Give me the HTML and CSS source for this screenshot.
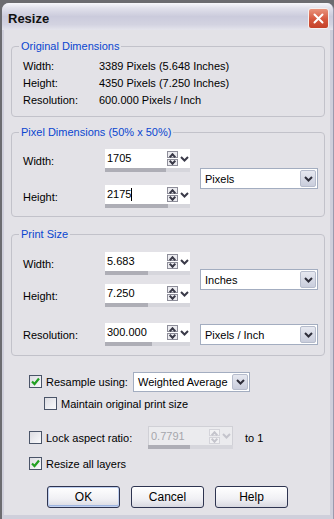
FILE: index.html
```html
<!DOCTYPE html>
<html lang="en">
<head>
    <meta charset="UTF-8">
    <title>Resize</title>
    <link rel="stylesheet" href="styles.css">
</head>
<body>
<div class="window">
    <div class="titlebar">
        <span class="title">Resize</span>
        <span class="close">
            <svg width="11" height="11" viewBox="0 0 11 11"><path d="M1.5 1.5 L9.5 9.5 M9.5 1.5 L1.5 9.5" stroke="#fff" stroke-width="2" stroke-linecap="round"/></svg>
        </span>
    </div>

    <div class="client">
        <!-- original dimensions -->
        <fieldset class="group original">
            <legend>Original Dimensions</legend>
            <div class="info-row"><span class="label">Width:</span><span>3389 Pixels (5.648 Inches)</span></div>
            <div class="info-row"><span class="label">Height:</span><span>4350 Pixels (7.250 Inches)</span></div>
            <div class="info-row"><span class="label">Resolution:</span><span>600.000 Pixels / Inch</span></div>
        </fieldset>

        <!-- pixel dimensions -->
        <fieldset class="group pixel-dims">
            <legend>Pixel Dimensions (50% x 50%)</legend>
            <div class="field-grid">
                <span class="label">Width:</span>
                <div class="numbox">
                    <div class="numbox-top">
                        <span class="numbox-value">1705</span>
                        <span class="spin"><span class="spin-up"></span><span class="spin-down"></span></span>
                        <span class="drop"><svg width="9" height="6" viewBox="0 0 9 6"><path d="M1 1 L4.5 4.5 L8 1" fill="none" stroke="#3a3a48" stroke-width="2"/></svg></span>
                    </div>
                    <div class="slider"><div class="slider-fill" style="width:72%"></div></div>
                </div>
                <div class="combo unit">
                    <span class="combo-text">Pixels</span>
                    <span class="combo-btn"><svg width="9" height="6" viewBox="0 0 9 6"><path d="M1 1 L4.5 4.5 L8 1" fill="none" stroke="#2e2e3a" stroke-width="2"/></svg></span>
                </div>
                <span class="label">Height:</span>
                <div class="numbox">
                    <div class="numbox-top">
                        <span class="numbox-value">2175<span class="caret"></span></span>
                        <span class="spin"><span class="spin-up"></span><span class="spin-down"></span></span>
                        <span class="drop"><svg width="9" height="6" viewBox="0 0 9 6"><path d="M1 1 L4.5 4.5 L8 1" fill="none" stroke="#3a3a48" stroke-width="2"/></svg></span>
                    </div>
                    <div class="slider"><div class="slider-fill" style="width:74%"></div></div>
                </div>
            </div>
        </fieldset>

        <!-- print size -->
        <fieldset class="group print-size">
            <legend>Print Size</legend>
            <div class="field-grid three">
                <span class="label">Width:</span>
                <div class="numbox">
                    <div class="numbox-top">
                        <span class="numbox-value">5.683</span>
                        <span class="spin"><span class="spin-up"></span><span class="spin-down"></span></span>
                        <span class="drop"><svg width="9" height="6" viewBox="0 0 9 6"><path d="M1 1 L4.5 4.5 L8 1" fill="none" stroke="#3a3a48" stroke-width="2"/></svg></span>
                    </div>
                    <div class="slider"><div class="slider-fill" style="width:50%"></div></div>
                </div>
                <div class="combo unit">
                    <span class="combo-text">Inches</span>
                    <span class="combo-btn"><svg width="9" height="6" viewBox="0 0 9 6"><path d="M1 1 L4.5 4.5 L8 1" fill="none" stroke="#2e2e3a" stroke-width="2"/></svg></span>
                </div>
                <span class="label">Height:</span>
                <div class="numbox">
                    <div class="numbox-top">
                        <span class="numbox-value">7.250</span>
                        <span class="spin"><span class="spin-up"></span><span class="spin-down"></span></span>
                        <span class="drop"><svg width="9" height="6" viewBox="0 0 9 6"><path d="M1 1 L4.5 4.5 L8 1" fill="none" stroke="#3a3a48" stroke-width="2"/></svg></span>
                    </div>
                    <div class="slider"><div class="slider-fill" style="width:51%"></div></div>
                </div>
                <span class="label res">Resolution:</span>
                <div class="numbox res">
                    <div class="numbox-top">
                        <span class="numbox-value">300.000</span>
                        <span class="spin"><span class="spin-up"></span><span class="spin-down"></span></span>
                        <span class="drop"><svg width="9" height="6" viewBox="0 0 9 6"><path d="M1 1 L4.5 4.5 L8 1" fill="none" stroke="#3a3a48" stroke-width="2"/></svg></span>
                    </div>
                    <div class="slider"><div class="slider-fill" style="width:55%"></div></div>
                </div>
                <div class="combo res res-unit">
                    <span class="combo-text">Pixels / Inch</span>
                    <span class="combo-btn"><svg width="9" height="6" viewBox="0 0 9 6"><path d="M1 1 L4.5 4.5 L8 1" fill="none" stroke="#2e2e3a" stroke-width="2"/></svg></span>
                </div>
            </div>
        </fieldset>

        <!-- options -->
        <div class="options">
            <div class="opt-row resample">
                <span class="check checked"><svg width="11" height="11" viewBox="0 0 11 11"><path d="M2 5.5 L4.5 8 L9 2.5" fill="none" stroke="#22a022" stroke-width="2.2"/></svg></span>
                <span class="opt-label">Resample using:</span>
                <div class="combo method">
                    <span class="combo-text">Weighted Average</span>
                    <span class="combo-btn"><svg width="9" height="6" viewBox="0 0 9 6"><path d="M1 1 L4.5 4.5 L8 1" fill="none" stroke="#2e2e3a" stroke-width="2"/></svg></span>
                </div>
            </div>
            <div class="opt-row maintain">
                <span class="check"></span>
                <span class="opt-label">Maintain original print size</span>
            </div>
            <div class="opt-row lock">
                <span class="check"></span>
                <span class="opt-label">Lock aspect ratio:</span>
                <div class="numbox disabled">
                    <div class="numbox-top">
                        <span class="numbox-value">0.7791</span>
                        <span class="spin"><span class="spin-up"></span><span class="spin-down"></span></span>
                        <span class="drop"><svg width="9" height="6" viewBox="0 0 9 6"><path d="M1 1 L4.5 4.5 L8 1" fill="none" stroke="#c4c4cc" stroke-width="2"/></svg></span>
                    </div>
                    <div class="slider"><div class="slider-fill" style="width:49%"></div></div>
                </div>
                <span class="to-one">to 1</span>
            </div>
            <div class="opt-row layers">
                <span class="check checked"><svg width="11" height="11" viewBox="0 0 11 11"><path d="M2 5.5 L4.5 8 L9 2.5" fill="none" stroke="#22a022" stroke-width="2.2"/></svg></span>
                <span class="opt-label">Resize all layers</span>
            </div>
        </div>

        <div class="buttons">
            <button class="btn default">OK</button>
            <button class="btn">Cancel</button>
            <button class="btn">Help</button>
        </div>
    </div>
</div>
</body>
</html>
```

FILE: styles.css
```css
body {
    margin: 0;
    background-color: #6c6c70;
    font-family: "Liberation Sans", Arial, sans-serif;
    font-size: 11px;
    color: #000;
}

.window {
    width: 332px;
    height: 516px;
    margin: 3px 0 0 2px;
    background-color: #cfcfdb;
    border-radius: 7px 7px 0 0;
    border-right: 1px solid #9a9aae;
    box-sizing: border-box;
    overflow: hidden;
}

.titlebar {
    height: 27px;
    box-sizing: border-box;
    padding: 5px 4px 0 6px;
    display: flex;
    align-items: center;
    justify-content: space-between;
    background: linear-gradient(#f8f8fc 0%, #e2e2ec 18%, #cbcbdc 50%, #d3d3e1 80%, #e4e4ec 100%);
}

.title {
    font-size: 13px;
    font-weight: bold;
    color: #111;
    line-height: 22px;
}

.close {
    width: 21px;
    height: 21px;
    box-sizing: border-box;
    border: 1px solid #f4f0f0;
    border-radius: 3px;
    background: linear-gradient(#e9937c, #d5563d 55%, #c4412a);
    display: flex;
    align-items: center;
    justify-content: center;
    margin-top: -2px;
}

.client {
    margin: 0 3px 0 2px;
    height: 485px;
    background-color: #e3e2e7;
    overflow: hidden;
    padding-top: 9px;
    box-sizing: border-box;
}

/* group boxes */
.group {
    margin: 0 5px 0 7px;
    border: 1px solid #c2c2ca;
    border-radius: 4px;
    padding: 5px 5px 7px 11px;
}

.group legend {
    color: #0a46d0;
    line-height: 14px;
    padding: 0 2px;
    margin-left: -4px;
}

.pixel-dims {
    margin-top: 8px;
    padding-top: 10px;
    padding-bottom: 8px;
}

.print-size {
    margin-top: 10px;
    padding-top: 11px;
    padding-bottom: 9px;
}

.info-row {
    display: flex;
    line-height: 17px;
}

.info-row .label {
    width: 76px;
}

.field-grid {
    display: grid;
    grid-template-columns: 82px 95px 118px;
    grid-template-rows: 23px 23px;
    row-gap: 13px;
    align-items: center;
}

.field-grid.three {
    grid-template-rows: 23px 23px auto;
    row-gap: 9px;
}

.field-grid .res {
    margin-top: 7px;
}

.field-grid .unit {
    grid-column: 3;
    grid-row: 1 / span 2;
}

.field-grid .res-unit {
    grid-column: 3;
    grid-row: 3;
}

/* numeric edit with slider */
.numbox {
    width: 85px;
    height: 23px;
    display: flex;
    flex-direction: column;
}

.numbox-top {
    height: 19px;
    display: flex;
    align-items: center;
    background-color: #fff;
}

.numbox-value {
    flex: 1;
    padding-left: 2px;
    line-height: 17px;
    display: flex;
    align-items: center;
}

.caret {
    display: inline-block;
    width: 1px;
    height: 13px;
    background-color: #000;
}

.spin {
    width: 11px;
    height: 15px;
    display: flex;
    flex-direction: column;
    gap: 1px;
}

.spin-up,
.spin-down {
    flex: 1;
    border: 1px solid #8e8e9a;
    background-color: #ececf0;
    position: relative;
}

.spin-up::after,
.spin-down::after {
    content: "";
    position: absolute;
    left: 2px;
    width: 3px;
    height: 3px;
    border-left: 2px solid #3a3a48;
    border-top: 2px solid #3a3a48;
}

.spin-up::after {
    top: 2px;
    transform: rotate(45deg);
}

.spin-down::after {
    top: -1px;
    transform: rotate(225deg);
}

.drop {
    width: 12px;
    display: flex;
    justify-content: center;
    align-items: center;
}

.slider {
    height: 4px;
    background-color: #d6d6dc;
}

.slider-fill {
    height: 100%;
    background-color: #aeaeb6;
}

.numbox.disabled .numbox-top {
    background-color: #ebebee;
    border: 1px solid #d0d0d6;
    border-bottom: 0;
    height: 18px;
}

.numbox.disabled .numbox-value {
    color: #a6a6ac;
}

.numbox.disabled .spin-up,
.numbox.disabled .spin-down {
    border-color: #d4d4da;
    background-color: #f2f2f4;
}

.numbox.disabled .spin-up::after,
.numbox.disabled .spin-down::after {
    border-color: #c4c4cc;
}

/* drop down lists */
.combo {
    height: 21px;
    box-sizing: border-box;
    border: 1px solid #a3adc0;
    background-color: #fff;
    display: flex;
    align-items: center;
    padding: 1px;
}

.combo-text {
    flex: 1;
    padding-left: 3px;
    white-space: nowrap;
}

.combo-btn {
    width: 16px;
    height: 17px;
    box-sizing: border-box;
    border: 1px solid #b6bccc;
    border-radius: 2px;
    background: linear-gradient(#e6e8f0, #c9cddc);
    display: flex;
    align-items: center;
    justify-content: center;
}

/* options */
.options {
    padding-left: 25px;
    margin-top: 15px;
}

.opt-row {
    display: flex;
    align-items: center;
    white-space: nowrap;
}

.resample {
    height: 21px;
}

.maintain {
    height: 15px;
    margin-top: 4px;
    padding-left: 15px;
}

.lock {
    height: 23px;
    margin-top: 15px;
}

.layers {
    height: 15px;
    margin-top: 7px;
}

.check {
    width: 13px;
    height: 13px;
    box-sizing: border-box;
    border: 1px solid #4a5468;
    background: linear-gradient(135deg, #dcdce2, #fafafc);
    display: flex;
    align-items: center;
    justify-content: center;
}

.opt-label {
    margin-left: 4px;
}

.resample .opt-label {
    width: 87px;
}

.lock .opt-label {
    width: 102px;
}

.method {
    width: 117px;
    height: 20px;
}

.method .combo-btn {
    height: 16px;
}

.to-one {
    margin-left: 12px;
}

/* buttons */
.buttons {
    display: flex;
    gap: 11px;
    padding-left: 43px;
    margin-top: 15px;
}

.btn {
    width: 73px;
    height: 22px;
    font-family: "Liberation Sans", Arial, sans-serif;
    font-size: 12px;
    color: #000;
    border: 1px solid #2e3450;
    border-radius: 3px;
    background: linear-gradient(#ffffff, #f0f0f4 60%, #d8d8e0);
    padding: 0;
}

.btn.default {
    box-shadow: inset 0 0 0 1px #c0d0f0, inset 0 -1px 0 1px #9db4e0;
}
```
